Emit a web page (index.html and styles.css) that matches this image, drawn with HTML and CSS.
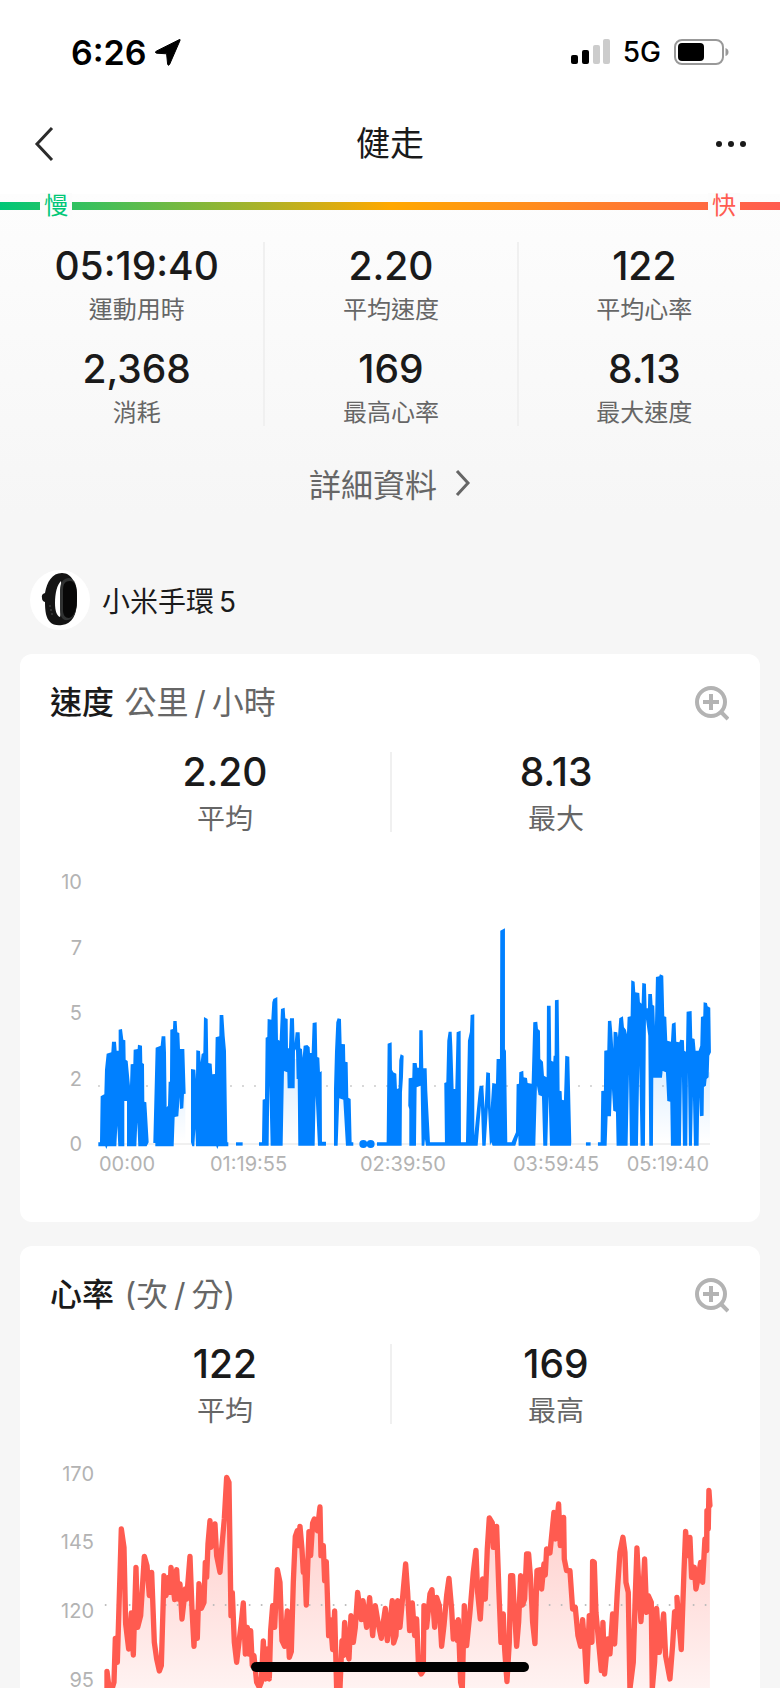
FILE: index.html
```html
<!DOCTYPE html>
<html lang="zh-Hant">
<head>
    <meta charset="UTF-8">
    <meta name="viewport" content="width=device-width, initial-scale=1.0">
    <title>健走</title>
    <link rel="stylesheet" href="styles.css">
</head>
<body>
    <div class="status-bar">
        <div class="status-left">
            <span class="time">6:26</span>
            <svg width="26" height="27" viewBox="0 0 26 27"><path d="M25 1.5Q25.6 0 24 .8L1.2 12.2Q-.8 13.6 1.6 14.2L11.6 14.8L12.6 25Q13.2 27.4 14.6 25.4Z" stroke="#000" stroke-width="1" stroke-linejoin="round"/></svg>
        </div>
        <div class="status-right">
            <svg width="39" height="26" viewBox="0 0 39 26">
                <rect x="0" y="16" width="7" height="9" rx="2"/>
                <rect x="11" y="11" width="7" height="14" rx="2"/>
                <rect x="22" y="6" width="7" height="19" rx="2" fill="#ccc"/>
                <rect x="32" y="0" width="7" height="25" rx="2" fill="#ccc"/>
            </svg>
            <span class="network">5G</span>
            <svg width="55" height="26" viewBox="0 0 55 26">
                <rect x="1" y="1" width="48" height="24" rx="7" fill="none" stroke="#999" stroke-width="2"/>
                <rect x="4" y="4" width="26" height="18" rx="4"/>
                <path d="M51.500 9Q54.500 10 54.500 13T51.500 17Z" fill="#999"/>
            </svg>
        </div>
    </div>

    <header class="nav">
        <button class="icon-btn" aria-label="返回">
            <svg width="22" height="36" viewBox="0 0 22 36"><path d="M19 2L4 18L19 34" fill="none" stroke="#2b2b2b" stroke-width="3"/></svg>
        </button>
        <h1>健走</h1>
        <button class="icon-btn" aria-label="更多">
            <svg width="32" height="8" viewBox="0 0 32 8"><circle cx="4" cy="4" r="3" fill="#1a1a1a"/><circle cx="16" cy="4" r="3" fill="#1a1a1a"/><circle cx="28" cy="4" r="3" fill="#1a1a1a"/></svg>
        </button>
    </header>

    <main>
        <div class="pace-bar">
            <span class="slow">慢</span>
            <span class="fast">快</span>
        </div>

        <div class="summary">
            <div class="summary-col">
                <div class="stat"><strong>05:19:40</strong><span>運動用時</span></div>
                <div class="stat"><strong>2,368</strong><span>消耗</span></div>
            </div>
            <div class="summary-col">
                <div class="stat"><strong>2.20</strong><span>平均速度</span></div>
                <div class="stat"><strong>169</strong><span>最高心率</span></div>
            </div>
            <div class="summary-col">
                <div class="stat"><strong>122</strong><span>平均心率</span></div>
                <div class="stat"><strong>8.13</strong><span>最大速度</span></div>
            </div>
        </div>

        <a class="details" href="#">詳細資料
            <svg width="16" height="28" viewBox="0 0 16 28"><path d="M2 2L13 14L2 26" fill="none" stroke="#666" stroke-width="3"/></svg>
        </a>

        <div class="device">
            <svg width="60" height="60" viewBox="0 0 60 60">
                <circle cx="30" cy="30" r="30" fill="#fff"/>
                <path fill-rule="evenodd" d="M32 3C22 3 17 12 15 23Q11 24 12 28Q12 31 15 32C15 41 16 48 20 52Q24 56 32 55C42 54 47 45 47 30C47 14 42 3 32 3ZM31 11C27 15 25 23 25 33C25 41 27 46 30 47C32 40 32 20 31 11Z" fill="#141414"/>
                <path d="M30 20C30 12 34 8 39 8C45 9 47 15 47 28C47 42 44 49 38 50C32 51 30 46 30 40Z" fill="#303232"/>
                <path d="M33 20C33 14 35 11 40 11C45 11 47 16 47 27C47 40 44 47 39 48C35 48 33 45 33 40Z" fill="#080808"/>
                <g fill="#3a3a3a"><circle cx="20" cy="36" r="1"/><circle cx="21" cy="40" r="1"/><circle cx="22" cy="44" r="1"/></g>
            </svg>
            <span>小米手環&thinsp;5</span>
        </div>

        <section class="card">
            <div class="card-header">
                <h2>速度 <small>公里&thinsp;/&thinsp;小時</small></h2>
                <button class="icon-btn" aria-label="放大速度圖表">
                    <svg width="34" height="35" viewBox="0 0 34 35" fill="none" stroke="#b3b3b3" stroke-width="4"><circle cx="16" cy="16" r="14"/><path d="M16 8V24M8 16H24M25 25L33 33"/></svg>
                </button>
            </div>
            <div class="card-stats">
                <div class="stat"><strong>2.20</strong><span>平均</span></div>
                <div class="stat"><strong>8.13</strong><span>最大</span></div>
            </div>
            <svg class="chart" viewBox="0 0 740 340">
                <defs>
                    <linearGradient id="speedFade" x1="0" y1="640" x2="0" y2="850" gradientUnits="userSpaceOnUse">
                        <stop offset="0" stop-color="#0080ff" stop-opacity=".12"/>
                        <stop offset="1" stop-color="#0080ff" stop-opacity="0"/>
                    </linearGradient>
                </defs>
                <g class="y-axis">
                    <text x="62" y="37">10</text>
                    <text x="62" y="103">7</text>
                    <text x="62" y="168">5</text>
                    <text x="62" y="234">2</text>
                    <text x="62" y="299">0</text>
                </g>
                <path class="baseline" d="M79 292H690"/>
                <path class="average" d="M79 234H690"/>
                <g transform="translate(20 7) scale(.3333)">
                    <g fill="url(#speedFade)">
                        <path d="M400 700H436V850H400Z"/>
                        <path d="M728 600H772V850H728ZM900 700H920V850H900Z"/>
                        <path d="M1490 680H1526V850H1490ZM1832 640H1892V850H1832ZM1974 640H2010V850H1974Z"/>
                    </g>
                    <g fill="#0080ff">
                        <path d="M175 850H180L182 712L193 706L195 632L200 584L214 580L216 548H228L230 575H236V512L246 510L250 542L256 544L257 602L263 606L270 680L272 616L280 615L281 572L293 570L294 557L306 560L307 612L312 615L313 728L319 730L326 850L320 862H295L292 790L289 862H261V726H253V862H235L232 800L229 862H202L199 870L196 862H175Z"/>
                        <path d="M340 850L347 566L362 560L365 532H376L378 580L380 745L384 740L386 668H390L391 512L399 510L400 486H410L412 520L418 522L420 570H433L437 704L432 705L430 748L420 750L419 715L415 772L404 774L401 862H346V852H340Z"/>
                        <path d="M453 630L466 632L468 660L469 574L480 576L482 610L485 585L490 582L492 474L503 480L505 612L515 614L517 646L525 645L527 535L538 532L539 468H550L554 530L558 575L562 850H565V862H535L532 870L529 862H468L466 810L463 862H457L453 850Z"/>
                        <path d="M588 850H608V860H588Z"/>
                    </g>
                    <g fill="#0080ff" transform="translate(660 0)">
                        <path d="M-3 850H6L8 722L15 720L17 536L22 534L23 480L34 482L37 430L40 420L52 414L54 542L59 545L63 450L74 446L76 478L83 480L84 568H87L90 478H102L104 552L107 520H119L121 568L126 570L128 596L131 560L142 558L149 565L150 582H155L158 492L170 490L172 594L178 596L180 640L185 636L186 848H198V860H174L167 710L164 860H115L113 660H110L108 570L105 575L104 688H83L82 640L72 636L68 860H32L28 680L26 860H-3Z"/>
                        <path d="M222 692L225 580L229 490L233 478L243 480L245 555L255 556L256 608L263 610L265 716L272 720L275 850H280V860H258L250 722L238 718L233 860H222Z"/>
                        <circle cx="310" cy="855" r="12"/><circle cx="332" cy="855" r="12"/>
                        <path d="M351 850H380L383 554L395 550L396 632L400 640L409 644L411 690L416 688L418 604L422 586L431 590L429 655L426 700L425 860H351Z"/>
                        <path d="M445 740L446 658L457 656L458 612H470L472 626H477L478 514H488L490 628H500L502 695L510 850H555L553 672L559 670L562 545L566 518H575L577 560L581 690H586L590 520L602 515L603 850H618L624 545L630 518L632 468L643 466V830L656 700L659 680H670L674 750L679 640L690 642L692 750L697 672L708 674L710 600H720L721 215L735 208V570L738 576L742 850H755L768 820L770 676L777 674L778 640L790 635L791 655L801 657L803 672L815 674L817 600L820 490L832 488L834 510L840 515L841 600L849 608L852 650L860 655L861 440H872L874 605L880 608L881 590H884L885 424L896 422L898 590L899 695L905 697L906 722L912 724L916 590L928 593L934 850L933 860H870L866 712L862 860H850L846 712L836 708L831 680L826 860H776L775 830L766 860H698L694 850L690 860L684 745L677 860H667L663 740L653 860H498L495 840L493 860H485L482 680L470 685L468 860H448V750Z"/>
                    </g>
                    <g fill="#0080ff" transform="translate(1350 0)">
                        <path d="M288 850H302V860H288Z"/>
                        <path d="M324 850H332L334 696L342 695L343 575L352 574L354 486L364 485L367 520L370 570L371 518L382 520L384 535L388 478L399 472L402 505L408 512L411 526L413 474L422 472L424 364L434 368L436 400L448 402L450 430L455 434L457 372L468 374L470 448H474L475 405H486L488 438L493 440L495 500L498 354L508 352L510 346L520 350L523 472L529 474L532 545L543 548L546 494L557 490L559 548L568 550L571 542L582 544L583 575L588 578L590 458L605 456L607 538L614 540L617 575H626L631 560L633 474L640 472L641 430L651 432L653 442L661 446L663 580L658 590L656 655L650 660L648 680L642 684L641 770L630 772L628 715L626 860H612L609 712L606 860H597L594 640L592 860H579L576 650L573 860H543L541 728L532 726L528 640L518 636L516 656H490L489 860H478L475 530L468 480L465 860H452L448 620L444 860H420L417 645L413 860H380L378 758L370 755L366 690L363 772H353L350 860H324Z"/>
                    </g>
                </g>
                <g class="x-axis">
                    <text x="79" y="319">00:00</text>
                    <text x="190" y="319">01:19:55</text>
                    <text x="340" y="319">02:39:50</text>
                    <text x="493" y="319">03:59:45</text>
                    <text x="689" y="319" text-anchor="end">05:19:40</text>
                </g>
            </svg>
        </section>

        <section class="card">
            <div class="card-header">
                <h2>心率 <small>(次&thinsp;/&thinsp;分)</small></h2>
                <button class="icon-btn" aria-label="放大心率圖表">
                    <svg width="34" height="35" viewBox="0 0 34 35" fill="none" stroke="#b3b3b3" stroke-width="4"><circle cx="16" cy="16" r="14"/><path d="M16 8V24M8 16H24M25 25L33 33"/></svg>
                </button>
            </div>
            <div class="card-stats">
                <div class="stat"><strong>122</strong><span>平均</span></div>
                <div class="stat"><strong>169</strong><span>最高</span></div>
            </div>
            <svg class="chart" viewBox="0 0 740 340">
                <defs>
                    <linearGradient id="heartFade" x1="0" y1="80" x2="0" y2="900" gradientUnits="userSpaceOnUse">
                        <stop offset="0" stop-color="#ff5b50" stop-opacity=".34"/>
                        <stop offset="1" stop-color="#ff5b50" stop-opacity="0"/>
                    </linearGradient>
                </defs>
                <g class="y-axis">
                    <text x="74" y="37">170</text>
                    <text x="74" y="105">145</text>
                    <text x="74" y="174">120</text>
                    <text x="74" y="243">95</text>
                </g>
                <g transform="translate(20 5) scale(.3333)">
                    <polygon id="heartArea" fill="url(#heartFade)"/>
                    <path class="average-wide" d="M197 468H2010"/>
                    <polyline id="heartLine" fill="none" stroke="#ff5b50" stroke-width="16" stroke-linejoin="round" stroke-linecap="round" points="
                        201,720 201,667 210,740 222,700 226,568 232,640 244,240 252,295 257,525 266,600 274,492 280,618 288,355 293,535 302,500 313,322 321,350 328,440 335,370 343,580 350,630 358,666 364,650 372,380
                        378,440 386,385 390,430 393,355 404,452 410,362 415,450 420,405 426,510 436,420 440,450 450,322 456,480 462,592 466,490 472,568 477,404 484,478 492,460 496,340 500,385 504,285 510,215 513,295
                        525,225 530,320 540,370 545,300 553,210 560,85 567,100 573,500 577,430 583,580 590,640 597,580 604,520 610,462 616,615 622,535 627,615 632,545 637,650 642,620 650,700 658,715 664,700 670,576
                        676,690 683,600 688,690 692,545 698,470 704,535 712,362 720,400 726,575 734,592 742,486 748,625 754,608 760,400 766,262 772,245 775,290 780,232 786,300 790,370 794,340 799,468 807,248 812,320
                        818,222 823,210 832,245 840,174 843,320 850,290 854,395 859,338 866,560 871,512 878,602 884,486 890,720 900,720 906,575 910,620 914,520 920,600 927,630 933,500 940,580 946,535 953,430 964,512
                        969,455 980,535 989,446 998,560 1006,470 1015,525 1024,568 1030,520 1036,478 1042,575 1050,520 1057,455 1061,582 1068,560 1073,455 1080,535 1092,400 1097,345 1103,430 1109,545 1117,462
                        1124,560 1130,510 1136,660 1144,675 1150,665 1152,470 1160,535 1170,435 1176,422 1184,535 1190,445 1198,470 1205,592 1212,530 1220,440 1227,388 1235,480 1240,570 1248,520 1252,575 1255,512
                        1262,700 1267,720 1273,470 1280,590 1290,490 1300,370 1308,304 1313,430 1321,510 1328,390 1336,450 1342,300 1348,207 1357,222 1360,295 1370,232 1377,430 1383,580 1390,495 1394,600 1401,698
                        1408,580 1412,380 1418,380 1422,460 1430,592 1436,520 1442,380 1448,468 1454,450 1460,315 1466,315 1472,390 1478,520 1485,584 1491,365 1500,362 1505,420 1512,345 1516,378 1520,300 1530,312
                        1542,190 1546,270 1556,165 1561,290 1571,205 1573,330 1580,365 1590,365 1598,480 1606,475 1614,560 1622,592 1628,512 1634,590 1640,698 1648,500 1656,580 1658,337 1663,340 1668,490 1678,600
                        1684,665 1689,520 1694,675 1704,570 1710,615 1718,495 1724,585 1732,430 1740,310 1749,265 1755,310 1758,400 1765,430 1770,720 1780,640 1786,440 1791,297 1797,420 1803,518 1810,410 1814,330
                        1820,490 1825,440 1834,460 1837,720 1844,640 1850,478 1858,610 1864,560 1871,495 1877,620 1890,690 1898,590 1904,488 1914,535 1911,445 1924,602 1932,370 1937,247 1943,320 1950,265 1955,385
                        1963,355 1968,420 1974,390 1982,340 1988,400 1995,270 2000,305 2001,185 2005,240 2007,124 2010,170"/>
                </g>
            </svg>
        </section>
    </main>
    <div class="home-indicator"></div>

    <script>
        // close the heart rate line along the bottom to get the shaded area
        const line = document.getElementById('heartLine').getAttribute('points').trim();
        document.getElementById('heartArea').setAttribute('points', `201,900 ${line} 2010,900`);
    </script>
</body>
</html>
```
FILE: styles.css
```css
* {
    box-sizing: border-box;
}
body {
    font-family: Inter, "Noto Sans CJK TC", sans-serif;
    margin: 0;
    height: 100vh;
    display: flex;
    flex-direction: column;
    overflow: hidden;
    position: relative;
    background-color: #fff;
    color: #1a1a1a;
}
.status-bar {
    display: flex;
    flex: none;
    justify-content: space-between;
    align-items: center;
    height: 104px;
    padding: 0 51px 0 71px;
    color: #000;
}
.status-left,
.status-right {
    display: flex;
    align-items: center;
}
.status-left {
    gap: 8px;
}
.status-right {
    gap: 13px;
}
.time {
    font-size: 34px;
    font-weight: 600;
}
.network {
    font-size: 28px;
    font-weight: 500;
}
.nav {
    display: grid;
    flex: none;
    grid-template-columns: 1fr auto 1fr;
    align-items: center;
    height: 90px;
    padding: 0 33px 10px;
}
.nav .icon-btn:last-child {
    justify-self: end;
}
h1 {
    margin: 0;
    font-size: 34px;
    line-height: 40px;
    font-weight: 400;
}
.icon-btn {
    display: flex;
    padding: 0;
    border: none;
    background: none;
    cursor: pointer;
}
main {
    flex: 1;
    min-height: 0;
    background: linear-gradient(#fdfdfd, #f6f6f6 320px);
}
.pace-bar {
    display: flex;
    justify-content: space-between;
    align-items: center;
    height: 24px;
    padding: 0 40px;
    background: linear-gradient(90deg, #00c777, #ffa800 50%, #ff5b50) center / 100% 8px no-repeat;
}
.pace-bar span {
    padding: 0 4px;
    font-size: 24px;
    line-height: 26px;
    background-color: #fcfcfc;
}
.slow {
    color: #00c777;
}
.fast {
    color: #ff5b50;
}
.summary {
    display: grid;
    grid-template-columns: repeat(3, 1fr);
    margin: 24px 10px 0;
}
.summary-col {
    display: flex;
    flex-direction: column;
    gap: 22px;
}
.summary-col + .summary-col {
    border-left: 2px solid #f0f0f0;
}
.stat {
    display: flex;
    flex-direction: column;
    align-items: center;
    gap: 7px;
    color: #666;
}
.stat strong {
    font-size: 39px;
    line-height: 48px;
    font-weight: 500;
    color: #1a1a1a;
}
.stat span {
    font-size: 24px;
    line-height: 26px;
}
.details {
    display: flex;
    justify-content: center;
    align-items: center;
    gap: 18px;
    height: 48px;
    margin-top: 33px;
    font-size: 32px;
    color: #666;
    text-decoration: none;
}
.device {
    display: flex;
    align-items: center;
    gap: 12px;
    margin: 63px 30px 24px;
    font-size: 28px;
}
.card {
    margin: 0 20px 24px;
    padding-bottom: 30px;
    border-radius: 12px;
    background-color: #fff;
}
.card-header {
    display: flex;
    justify-content: space-between;
    align-items: center;
    height: 98px;
    padding: 0 31px 0 30px;
}
h2 {
    margin: 0;
    font-size: 32px;
    line-height: 40px;
    font-weight: 500;
}
h2 small {
    margin-left: 2px;
    font-size: 32px;
    font-weight: 400;
    color: #666;
}
.card-stats {
    display: grid;
    grid-template-columns: 1fr 1fr;
    margin: 0 40px 20px;
}
.card-stats .stat {
    height: 80px;
}
.card-stats .stat + .stat {
    border-left: 2px solid #f0f0f0;
}
.card-stats .stat strong {
    line-height: 40px;
}
.card-stats .stat span {
    font-size: 28px;
    line-height: 40px;
}
.chart {
    display: block;
    width: 100%;
}
.chart text {
    font-size: 20px;
    fill: #b3b3b3;
}
.y-axis {
    text-anchor: end;
}
.baseline {
    stroke: #f0f0f0;
    stroke-width: 2;
}
.average {
    fill: none;
    stroke: #ccc;
    stroke-width: 2;
    stroke-linecap: round;
    stroke-dasharray: 0 12;
}
.average-wide {
    stroke: #bbb;
    stroke-width: 6;
    stroke-linecap: round;
    stroke-dasharray: 0 36;
}
.home-indicator {
    position: absolute;
    left: 50%;
    bottom: 16px;
    width: 278px;
    height: 10px;
    margin-left: -139px;
    border-radius: 5px;
    background-color: #000;
}
```
